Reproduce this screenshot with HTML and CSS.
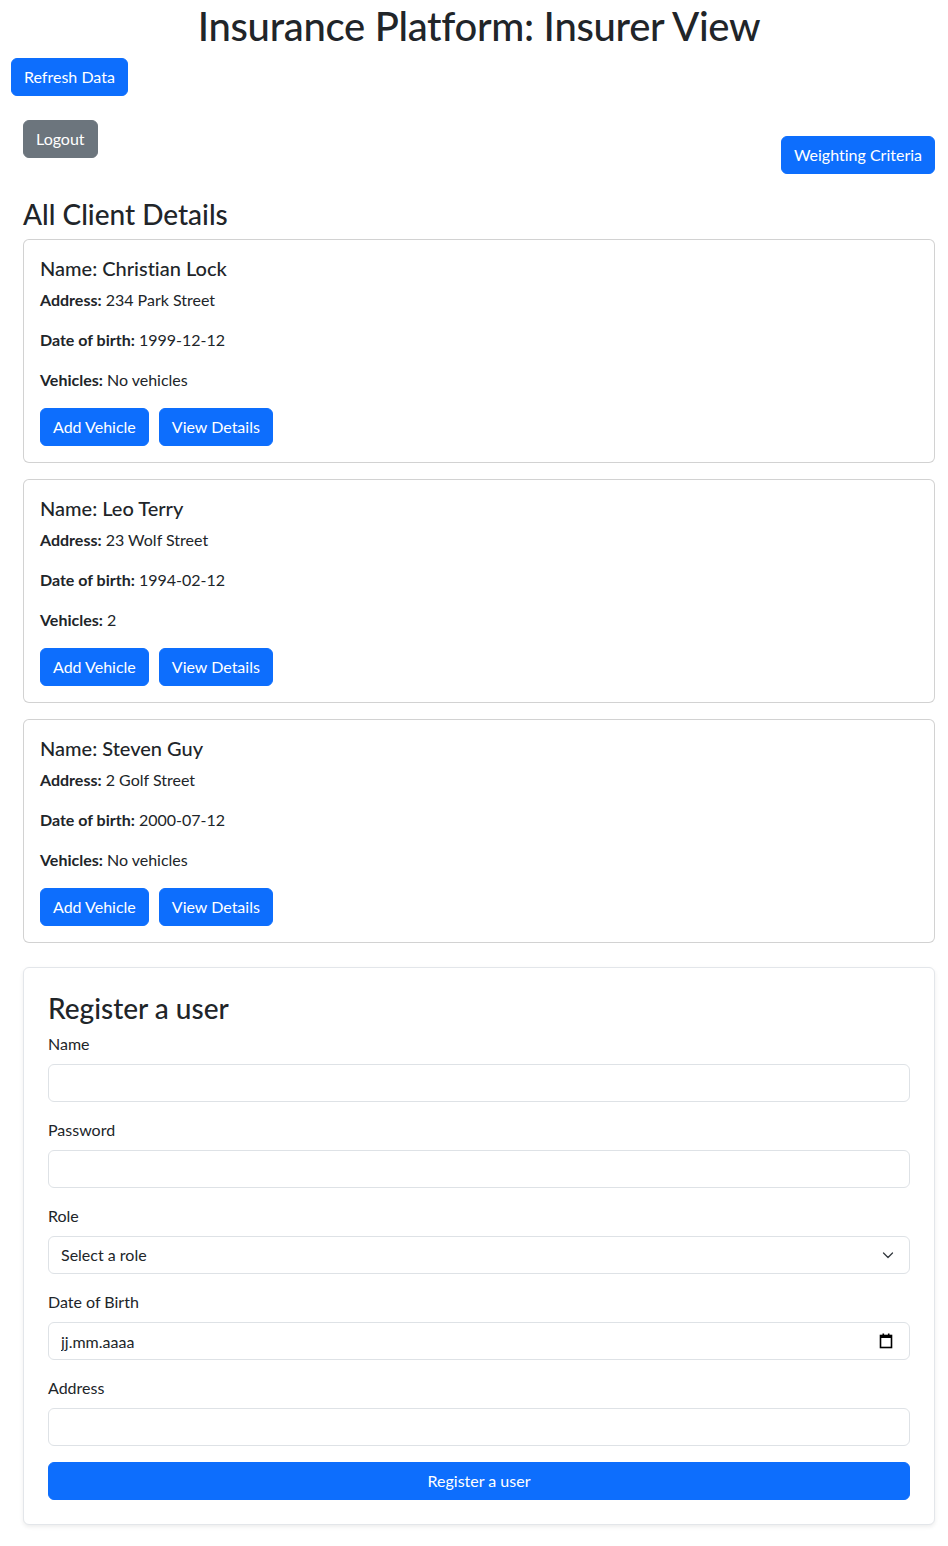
FILE: index.html
```html
<!DOCTYPE html>
<html lang="en">
<head>
<meta charset="utf-8">
<title>Insurance Platform: Insurer View</title>
<link rel="stylesheet" href="styles.css">
</head>
<body>
<div class="page">
  <h1 class="title">Insurance Platform: Insurer View</h1>
  <div class="refresh-row">
    <button class="btn btn-primary">Refresh Data</button>
  </div>
  <div class="toolbar">
    <button class="btn btn-secondary">Logout</button>
    <button class="btn btn-primary btn-weight">Weighting Criteria</button>
  </div>

  <h3 class="section-title">All Client Details</h3>

  <div class="card">
    <div class="card-body">
      <h5 class="card-title">Name: Christian Lock</h5>
      <p><strong>Address:</strong> 234 Park Street</p>
      <p><strong>Date of birth:</strong> 1999-12-12</p>
      <p><strong>Vehicles:</strong> No vehicles</p>
      <div class="actions">
        <button class="btn btn-primary">Add Vehicle</button>
        <button class="btn btn-primary">View Details</button>
      </div>
    </div>
  </div>

  <div class="card">
    <div class="card-body">
      <h5 class="card-title">Name: Leo Terry</h5>
      <p><strong>Address:</strong> 23 Wolf Street</p>
      <p><strong>Date of birth:</strong> 1994-02-12</p>
      <p><strong>Vehicles:</strong> 2</p>
      <div class="actions">
        <button class="btn btn-primary">Add Vehicle</button>
        <button class="btn btn-primary">View Details</button>
      </div>
    </div>
  </div>

  <div class="card">
    <div class="card-body">
      <h5 class="card-title">Name: Steven Guy</h5>
      <p><strong>Address:</strong> 2 Golf Street</p>
      <p><strong>Date of birth:</strong> 2000-07-12</p>
      <p><strong>Vehicles:</strong> No vehicles</p>
      <div class="actions">
        <button class="btn btn-primary">Add Vehicle</button>
        <button class="btn btn-primary">View Details</button>
      </div>
    </div>
  </div>

  <div class="card card-register">
    <form class="register-body">
      <h3 class="register-title">Register a user</h3>
      <div class="field">
        <label class="form-label" for="name">Name</label>
        <input class="form-control" id="name" type="text">
      </div>
      <div class="field">
        <label class="form-label" for="password">Password</label>
        <input class="form-control" id="password" type="password">
      </div>
      <div class="field">
        <label class="form-label" for="role">Role</label>
        <div class="control-wrap">
          <select class="form-control form-select" id="role">
            <option>Select a role</option>
          </select>
          <svg class="select-arrow" width="16" height="16" viewBox="0 0 16 16" aria-hidden="true"><path d="M3.5 6l4.5 4.5L12.5 6" fill="none" stroke="#343a40" stroke-width="1.3" stroke-linecap="round" stroke-linejoin="round"/></svg>
        </div>
      </div>
      <div class="field">
        <label class="form-label" for="dob">Date of Birth</label>
        <div class="control-wrap">
          <input class="form-control date-input" id="dob" type="text" placeholder="jj.mm.aaaa">
          <svg class="date-icon" width="14" height="16" viewBox="0 0 14 16" aria-hidden="true"><rect x="1.5" y="2.5" width="11" height="12" fill="none" stroke="#000" stroke-width="1.6"/><rect x="1.5" y="2.5" width="11" height="2.5" fill="#000"/><rect x="3.5" y="0.5" width="1.6" height="3" fill="#000"/><rect x="8.9" y="0.5" width="1.6" height="3" fill="#000"/></svg>
        </div>
      </div>
      <div class="field">
        <label class="form-label" for="address">Address</label>
        <input class="form-control" id="address" type="text">
      </div>
      <button class="btn btn-primary btn-block" type="button">Register a user</button>
    </form>
  </div>
</div>
</body>
</html>
```
FILE: styles.css
```css
* { box-sizing: border-box; }

html, body {
  margin: 0;
  padding: 0;
  background: #fff;
}

body {
  font-family: Lato, "Liberation Sans", sans-serif;
  font-size: 16px;
  line-height: 1.5;
  color: #212529;
  font-variant-ligatures: none;
}

.page {
  padding: 2px 13px 21px 23px;
}

h1, h3, h5 {
  margin: 0;
  font-weight: 500;
  line-height: 1.2;
}

.title {
  font-size: 40px;
  letter-spacing: -0.3px;
  text-align: center;
  margin-bottom: 8px;
}

.refresh-row {
  margin-left: -12px;
  margin-top: 2px;
}

.btn {
  font-family: inherit;
  font-size: 16px;
  line-height: 24px;
  padding: 6px 12px;
  border: 1px solid transparent;
  border-radius: 6px;
  cursor: pointer;
  color: #fff;
  font-variant-ligatures: none;
}

.btn-primary {
  background: #0d6efd;
  border-color: #0d6efd;
}

.btn-secondary {
  background: #6c757d;
  border-color: #6c757d;
}

.toolbar {
  display: flex;
  justify-content: space-between;
  align-items: flex-start;
  margin-top: 24px;
}

.btn-weight {
  margin-top: 16px;
}

.section-title {
  font-size: 28px;
  margin-top: 24px;
  margin-bottom: 7px;
}

.card {
  border: 1px solid rgba(0, 0, 0, 0.175);
  border-radius: 6px;
  background: #fff;
  margin-bottom: 16px;
}

.card-body {
  padding: 16px;
}

.card-title {
  font-size: 20px;
  margin-bottom: 8px;
}

.card-body p {
  margin: 0 0 16px;
}

.card-body strong {
  font-weight: 700;
}

.actions {
  display: flex;
  gap: 10px;
}

.card-register {
  margin-top: 24px;
  margin-bottom: 0;
  border-color: #e3e6ea;
  box-shadow: 0 2px 4px rgba(0, 0, 0, 0.075);
}

.register-body {
  padding: 24px;
}

.register-title {
  font-size: 28px;
  margin-bottom: 7px;
}

.field {
  margin-bottom: 16px;
}

.form-label {
  display: block;
  margin-bottom: 8px;
}

.form-control {
  display: block;
  width: 100%;
  height: 38px;
  padding: 6px 12px;
  font-family: inherit;
  font-size: 16px;
  line-height: 24px;
  color: #212529;
  background: #fff;
  border: 1px solid #dee2e6;
  border-radius: 6px;
  appearance: none;
  -webkit-appearance: none;
  outline: none;
}

.form-control::placeholder {
  color: #212529;
  opacity: 1;
}

.control-wrap {
  position: relative;
}

.select-arrow {
  position: absolute;
  right: 14px;
  top: 11px;
  pointer-events: none;
}

.date-icon {
  position: absolute;
  right: 17px;
  top: 11px;
  pointer-events: none;
}

.btn-block {
  display: block;
  width: 100%;
}
```
